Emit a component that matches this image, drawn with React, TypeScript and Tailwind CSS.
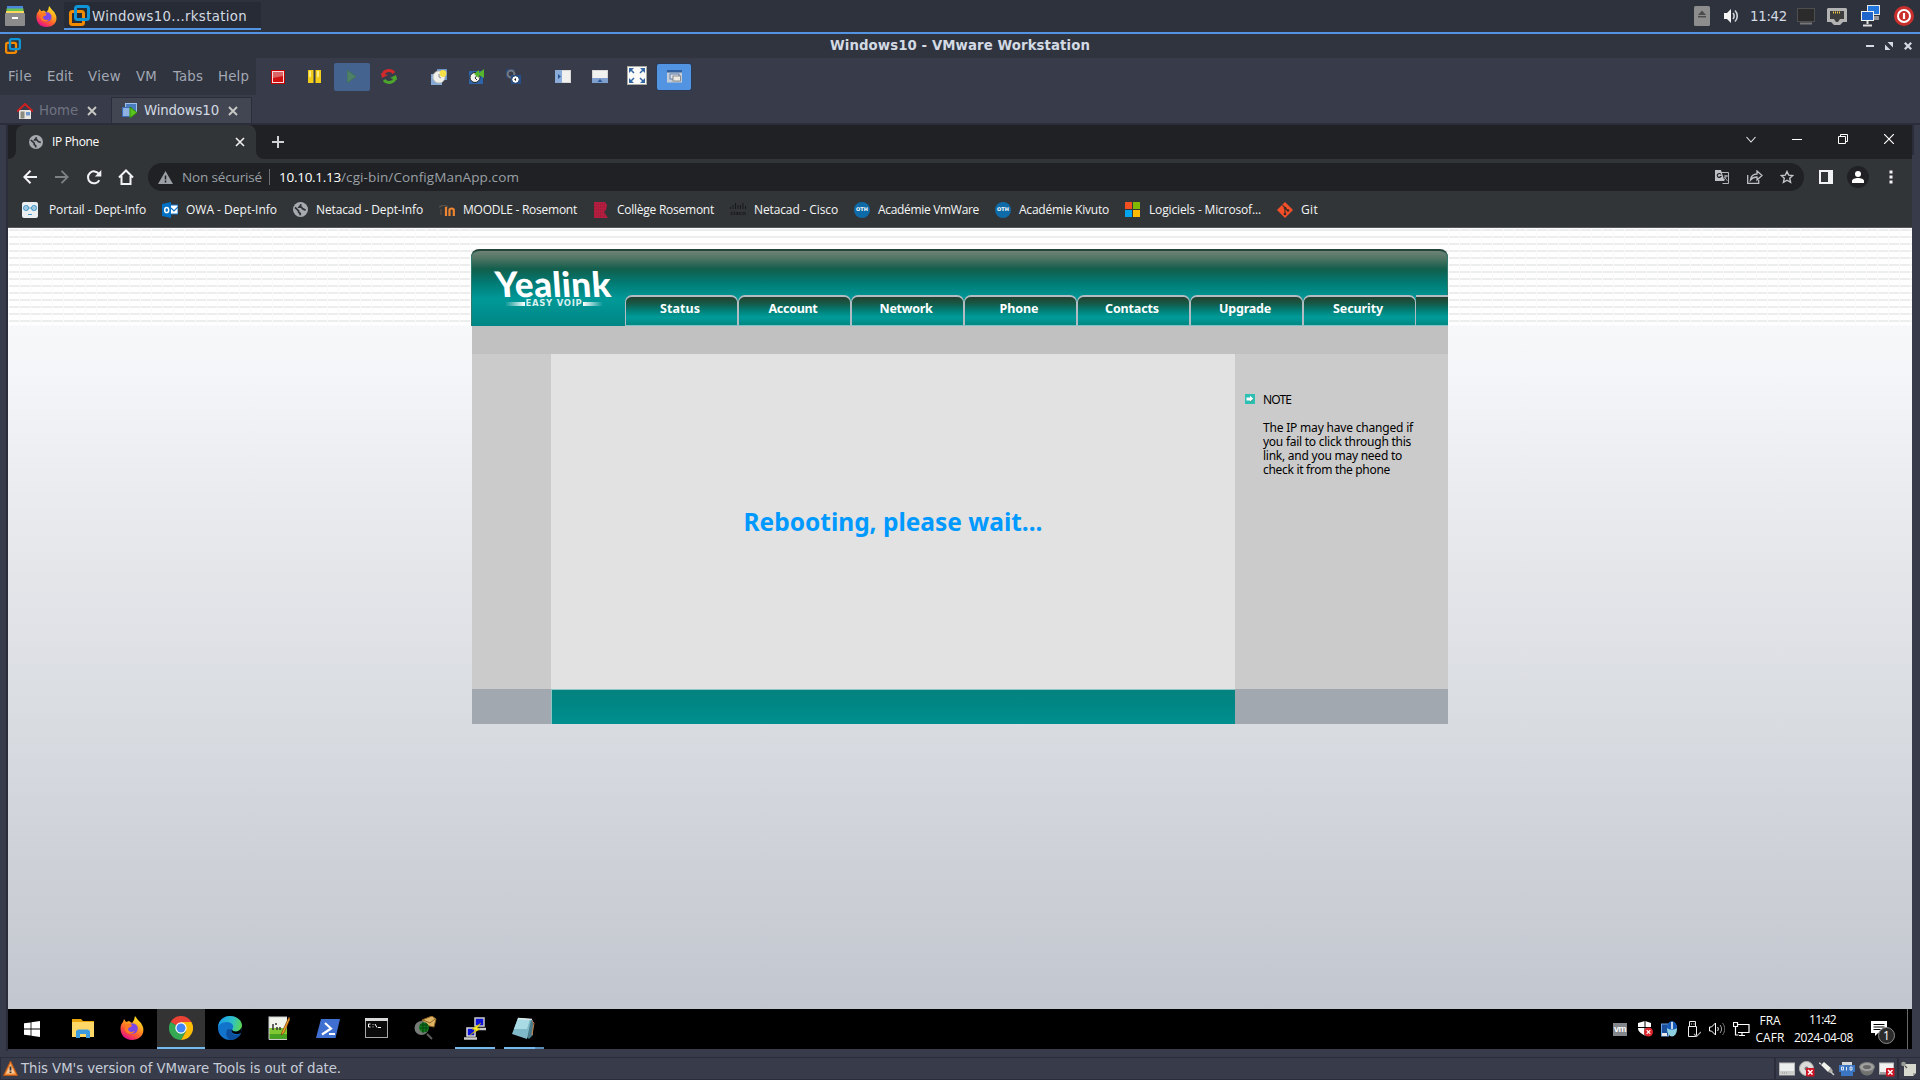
import { useLayoutEffect, useRef, useState } from "react";
import type { ReactNode } from "react";

/* Single line of text whose tracking is computed so that it fills `w` pixels. */
function T({ w, className = "", children }: { w: number; className?: string; children: ReactNode }) {
  const ref = useRef<HTMLSpanElement>(null);
  const [ls, setLs] = useState(0);
  useLayoutEffect(() => {
    const el = ref.current;
    if (!el) return;
    const n = (el.textContent ?? "").length;
    setLs((w - el.getBoundingClientRect().width) / n);
  }, [w]);
  return (
    <span ref={ref} className={"inline-block shrink-0 whitespace-nowrap " + className} style={{ letterSpacing: ls + "px" }}>
      {children}
    </span>
  );
}

function Svg({ w, h, vb, className = "", children }: { w: number; h: number; vb?: string; className?: string; children: ReactNode }) {
  return (
    <svg width={w} height={h} viewBox={vb ?? `0 0 ${w} ${h}`} className={"shrink-0 " + className} fill="none">
      {children}
    </svg>
  );
}

function VmLogo({ s, className = "" }: { s: number; className?: string }) {
  return (
    <Svg w={s} h={s} vb="0 0 21 21" className={className}>
      <rect x="6.5" y="1.5" width="13" height="13" rx="2" stroke="#0f95d7" strokeWidth="3" />
      <rect x="1.5" y="6.5" width="13" height="13" rx="2" stroke="#f38b00" strokeWidth="3" />
      <path d="M6.5 9V4" stroke="#0f95d7" strokeWidth="3" />
      <path d="M11 14.5h5" stroke="#0f95d7" strokeWidth="3" />
    </Svg>
  );
}

function Firefox({ s, className = "" }: { s: number; className?: string }) {
  return (
    <Svg w={s} h={s} vb="0 0 24 24" className={className}>
      <defs>
        <linearGradient id="ff" x1="18" y1="2" x2="6" y2="22" gradientUnits="userSpaceOnUse">
          <stop stopColor="#ffe226" />
          <stop offset=".4" stopColor="#ff9a1f" />
          <stop offset=".7" stopColor="#ff5535" />
          <stop offset="1" stopColor="#e31587" />
        </linearGradient>
      </defs>
      <path d="M3 6l1-3 2 3 3-1 3 2 2-3 1-4 3 4 3 3 2 4c2 8-4 13-11 13S.5 19 .5 12.500C.5 9.500 1.500 7.500 3 6z" fill="url(#ff)" />
      <circle cx="12.500" cy="12.500" r="5.300" fill="#7a48e6" />
      <path d="M5 9c3-2 5-1 7 0l-1 2c-2 0-3 1-3 2.500 1 3 5 3 7 1-2 5-9 4-10-1z" fill="#ff7a22" />
    </Svg>
  );
}

function Globe({ s = 14 }: { s?: number }) {
  return (
    <Svg w={s} h={s} vb="0 0 14 14">
      <circle cx="7" cy="7" r="7" fill="#a6abb0" />
      <path d="M1.800 5l3.400 3.200v1.300l1.500 1.200v1.700M7.500 2.200c-.4 1.500-1 1.600-1.700 2.600h2l1.400 1.700 2.600 1" stroke="#323538" strokeWidth="1.700" />
    </Svg>
  );
}

function Oth() {
  return (
    <span className="flex size-4 shrink-0 items-center justify-center rounded-full bg-[#0f6ba8] font-['DejaVu_Sans'] text-[5px] font-bold text-white">
      OTH
    </span>
  );
}

function CloseX({ s, c, sw = 1.6, className = "" }: { s: number; c: string; sw?: number; className?: string }) {
  return (
    <Svg w={s} h={s} vb="0 0 10 10" className={className}>
      <path d="M1 1l8 8M9 1l-8 8" stroke={c} strokeWidth={sw} />
    </Svg>
  );
}

function HostPanel() {
  return (
    <div className="flex h-[34px] items-center border-b-2 border-[#5294e2] bg-[#2e323d]">
      <Svg w={20} h={20} className="ml-[5px]">
        <rect x="2" width="16" height="4" fill="#4a86dc" />
        <rect x="1.500" y="2.500" width="17" height="3" fill="#66c350" />
        <rect x="1" y="5" width="18" height="3" fill="#f9d65c" />
        <rect y="7" width="20" height="13" rx="1" fill="#8b8b8b" />
        <rect x="7" y="11" width="6" height="2" fill="#fff" />
      </Svg>
      <Firefox s={21} className="ml-[11px]" />
      <div className="ml-[7px] flex h-7 w-[197px] items-center border-b-2 border-[#5294e2] bg-[#272b35] pl-[5px]">
        <VmLogo s={21} />
        <T w={155} className="ml-[2px] pt-[3px] text-[13.3px] text-[#d3dae3]">Windows10...rkstation</T>
      </div>
      <div className="ml-auto flex items-center pr-[6px]">
        <Svg w={16} h={20}>
          <rect width="16" height="20" rx="1.500" fill="#8d8d8d" />
          <path d="M8 4.500l4 4.500H4zM4 10h8v1.500H4z" fill="#4c4c4c" />
        </Svg>
        <Svg w={15} h={14} className="ml-[14px]">
          <path d="M0 4h3l4-4v14l-4-4H0z" fill="#f5f5f5" />
          <path d="M9 4c1.500 2 1.500 4 0 6M11 1.500c3 3 3 8 0 11" stroke="#d0d3d8" strokeWidth="1.600" />
        </Svg>
        <T w={37} className="ml-[11px] pt-px text-[13.3px] text-[#d3dae3]">11:42</T>
        <Svg w={18} h={17} className="ml-[10px]">
          <rect x=".5" y=".5" width="17" height="13" fill="#2b2b2b" stroke="#4e4e4e" />
          <path d="M3 15.500h12" stroke="#777" strokeWidth="2" />
        </Svg>
        <Svg w={20} h={17} className="ml-[12px]">
          <path d="M1 0h18l1 1v13h-4l-3 3H7l-3-3H0V1z" fill="#b3b3b3" />
          <path d="M3 3h14v8h-4l-2 3H9l-2-3H3z" fill="#3d3d3d" />
          <path d="M6 4.500h8" stroke="#f2c744" strokeWidth="2" strokeDasharray="1 1" />
        </Svg>
        <Svg w={20} h={22} className="ml-[14px]">
          <rect x="6.500" y=".5" width="12" height="9" fill="#2277dd" stroke="#e5e5e5" />
          <path d="M11 12h7M12 14h6" stroke="#bbb" strokeWidth="1.500" />
          <rect x=".5" y="6.500" width="12" height="9" fill="#1f66cc" stroke="#f2f2f2" />
          <path d="M6.500 16v3M2 20.500h9" stroke="#ddd" strokeWidth="2" />
        </Svg>
        <Svg w={20} h={20} className="ml-[13px]">
          <circle cx="10" cy="10" r="10" fill="#c9302c" />
          <circle cx="10" cy="10" r="6" stroke="#fff" strokeWidth="2" />
          <path d="M10 7v6" stroke="#fff" strokeWidth="2.200" />
        </Svg>
      </div>
    </div>
  );
}

function TitleBar() {
  return (
    <div className="grid h-6 grid-cols-3 items-center bg-[#2f343f]">
      <VmLogo s={16} className="ml-[5px]" />
      <T w={260} className="justify-self-center text-[13.3px] leading-[20px] font-bold text-[#d3dae3]">Windows10 - VMware Workstation</T>
      <div className="flex items-center gap-[11px] justify-self-end pr-[8px]">
        <Svg w={8} h={8}><path d="M0 4h8" stroke="#d3dae3" strokeWidth="2" /></Svg>
        <Svg w={8} h={8}><path d="M2.500 0H8v5.500zM0 2.500V8h5.500z" fill="#d3dae3" /></Svg>
        <CloseX s={8} c="#d3dae3" sw={2.800} />
      </div>
    </div>
  );
}

function MenuRow() {
  const m = "text-[13.3px] text-[#a3a8b4]";
  return (
    <div className="flex h-[37px] bg-[#383b4a]">
      <div className="flex w-64 items-center bg-[#2f343f] pl-2">
        <T w={24} className={m}>File</T>
        <T w={26} className={m + " ml-[15px]"}>Edit</T>
        <T w={33} className={m + " ml-[15px]"}>View</T>
        <T w={21} className={m + " ml-[15px]"}>VM</T>
        <T w={30} className={m + " ml-[16px]"}>Tabs</T>
        <T w={31} className={m + " ml-[15px]"}>Help</T>
      </div>
      <div className="flex items-center pl-[15px]">
        <Svg w={14} h={14}>
          <rect x=".5" y=".5" width="13" height="13" fill="#f8dada" stroke="#c40000" />
          <rect x="2" y="2" width="10" height="10" fill="#cf1111" />
          <path d="M2 2h10v4l-10 2z" fill="#dc6464" />
        </Svg>
        <Svg w={13} h={13} className="ml-[23px]">
          <rect width="5.500" height="13" fill="#f2ce1b" />
          <rect x="7.500" width="5.500" height="13" fill="#f2ce1b" />
          <path d="M1 1h2v6H1zM9 1h2v6H9z" fill="#fbe98a" />
        </Svg>
        <div className="ml-[13px] flex h-7 w-9 items-center justify-center rounded-[2px] bg-[#45638f]">
          <Svg w={9} h={13} className="-ml-0.5"><path d="M0 0l9 6.500L0 13z" fill="#4f8169" stroke="#3f7358" /></Svg>
        </div>
        <Svg w={16} h={15} className="ml-[11px]">
          <path d="M2 7c0-6 8-7 11-3" stroke="#d02a2a" strokeWidth="3" />
          <path d="M0 4l1 5 6-3z" fill="#d02a2a" />
          <path d="M14 8c0 6-8 7-11 3" stroke="#4da62c" strokeWidth="3" />
          <path d="M16 11l-1-5-6 3z" fill="#4da62c" />
        </Svg>
        <Svg w={16} h={16} className="ml-[34px]">
          <rect x="6" width="10" height="11" fill="#6d93c6" />
          <rect y="5" width="11" height="11" fill="#86a9d6" />
          <circle cx="8" cy="8" r="6" fill="#f0f0ea" stroke="#c5c5c0" />
          <circle cx="12" cy="4.500" r="3.400" fill="#f5e04a" />
          <path d="M8 8V5M8 8l2 1" stroke="#888" />
        </Svg>
        <Svg w={16} h={16} className="ml-[21px]">
          <rect x="1" y="2" width="14" height="13" fill="#2d63a8" />
          <circle cx="7" cy="8.500" r="5" fill="#f2f2ee" stroke="#222" />
          <path d="M7 9l3-4M7 9l2 2" stroke="#333" />
          <path d="M16 0v9l-5-3v3L6 5l5-4v3z" fill="#55b52c" />
        </Svg>
        <Svg w={16} h={16} className="ml-[22px]">
          <path d="M1.500 8.500v-7h7" stroke="#24508e" strokeWidth="2" />
          <circle cx="5" cy="5" r="3.400" stroke="#737880" strokeWidth="2" />
          <rect x="5" y="6" width="10" height="9" fill="#24508e" />
          <circle cx="9.500" cy="10.500" r="3.800" fill="#fff" stroke="#173766" />
          <path d="M8 10.500l2-1.500v3z" fill="#222" />
        </Svg>
        <Svg w={16} h={13} className="ml-[33px]">
          <rect x=".5" y=".5" width="15" height="12" fill="#f1f1ef" stroke="#d6d6d4" />
          <rect width="7" height="13" fill="#8bacd8" />
          <path d="M3 4l3 2.500L3 9z" fill="#2c5796" />
        </Svg>
        <Svg w={16} h={13} className="ml-[21px]">
          <rect x=".5" y=".5" width="15" height="12" fill="#f1f1ef" stroke="#d6d6d4" />
          <rect y="8" width="16" height="5" fill="#7f9fcd" />
          <path d="M5.500 12L8 9l2.500 3z" fill="#2c5796" />
        </Svg>
        <Svg w={20} h={20} className="-mt-0.5 ml-[19px]">
          <rect x=".5" y=".5" width="19" height="18" fill="#fbfbfa" stroke="#aaa9a4" />
          <path d="M2 2h5L2 7zM18 2h-5l5 5zM2 17h5l-5-5zM18 17h-5l5-5z" fill="#3465a4" />
          <path d="M4 4l3 3M16 4l-3 3M4 15l3-3M16 15l-3-3" stroke="#3465a4" strokeWidth="1.500" />
        </Svg>
        <div className="ml-[10px] flex h-[26px] w-[34px] items-center justify-center rounded-[2px] bg-[#5294e2] shadow-[0_0_0_1px_#2b3a52]">
          <Svg w={15} h={13}>
            <rect width="15" height="12.500" fill="#c4ccd6" />
            <rect width="15" height="2.500" fill="#33609f" />
            <rect x="3" y="4" width="9" height="5" fill="#dde2e8" stroke="#5f7fae" />
            <rect x="6" y="6" width="7.500" height="5" fill="#eceae2" stroke="#777" strokeWidth=".8" />
          </Svg>
        </div>
      </div>
    </div>
  );
}

function VmTabs() {
  return (
    <div className="flex h-[30px] border-b-2 border-[#2b2e3a] bg-[#383b4a]">
      <div className="flex w-[111px] items-center pt-[3px] pl-[17px]">
        <Svg w={16} h={16}>
          <path d="M2 7h12v9H2z" fill="#e8e6de" />
          <path d="M0 8.500L8 1l8 7.500" stroke="#cf1f1f" strokeWidth="2" />
          <rect x="3.500" y="8.500" width="4" height="7" fill="#8a8a80" />
          <rect x="9" y="9" width="4" height="3.500" fill="#7098cf" />
        </Svg>
        <T w={39} className="ml-[6px] text-[13.3px] text-[#6f7380]">Home</T>
        <CloseX s={10} c="#c8c9c4" sw={1.900} className="ml-[9px]" />
      </div>
      <div className="mt-[2px] flex w-[141px] items-center border border-b-0 border-[#2b2e3a] bg-[#424652] pl-[10px]">
        <Svg w={16} h={15}>
          <rect x="3.500" y=".5" width="11" height="8" fill="#4a7cc0" stroke="#9fc0ea" />
          <rect x=".5" y="4.500" width="9" height="9" fill="#8db1e0" stroke="#3d6db4" />
          <path d="M8 4l7 5.500L8 15z" fill="#59c41d" stroke="#348a0d" />
        </Svg>
        <T w={75} className="ml-[6px] text-[13.3px] text-[#d3dae3]">Windows10</T>
        <CloseX s={10} c="#c8c9c4" sw={1.900} className="ml-[9px]" />
      </div>
    </div>
  );
}

const seg = "font-['Open_Sans']";

function ChromeTop() {
  return (
    <>
      <div className="flex h-[34px] bg-[#202124]">
        <div className="flex h-full w-2 bg-[#323538]"><div className="h-full w-full rounded-br-lg bg-[#202124]" /></div>
        <div className="flex w-60 items-center rounded-t-lg bg-[#323538] pl-[13px]">
          <Globe />
          <T w={47} className={seg + " ml-[9px] text-[12px] text-white"}>IP Phone</T>
          <CloseX s={10} c="#f1f1f1" className="ml-auto mr-[11px]" />
        </div>
        <div className="flex h-full w-2 bg-[#323538]"><div className="h-full w-full rounded-bl-lg bg-[#202124]" /></div>
        <Svg w={12} h={12} className="ml-2 self-center"><path d="M6 0v12M0 6h12" stroke="#cfd1d4" strokeWidth="2" /></Svg>
        <div className="ml-auto flex items-center gap-9 pr-[18px] pb-[6px]">
          <Svg w={10} h={7}><path d="M.5 1L5 6l4.500-5" stroke="#e8eaed" strokeWidth="1.100" /></Svg>
          <Svg w={10} h={10}><path d="M0 5.500h10" stroke="#fff" /></Svg>
          <Svg w={10} h={10}><path d="M.5 2.500h7v7h-7zM2.500 2V.5h7v7H8" stroke="#fff" /></Svg>
          <Svg w={10} h={10}><path d="M0 0l10 10M10 0L0 10" stroke="#fff" strokeWidth="1.200" /></Svg>
        </div>
      </div>
      <div className="flex h-9 items-center bg-[#323538] pl-[15px]">
        <Svg w={14} h={14}><path d="M14 7H1.500M7.500.8L1.300 7l6.200 6.200" stroke="#f1f3f4" strokeWidth="2" /></Svg>
        <Svg w={14} h={14} className="ml-[18px]"><path d="M0 7h12.500M6.500.8L12.700 7l-6.200 6.200" stroke="#7e8184" strokeWidth="1.800" /></Svg>
        <Svg w={15} h={15} className="ml-[18px]">
          <path d="M12.300 10.200A6 6 0 1 1 12 4" stroke="#f1f3f4" strokeWidth="2" />
          <path d="M14.300 0v6.500H7.800z" fill="#f1f3f4" />
        </Svg>
        <Svg w={16} h={16} className="ml-[16px]"><path d="M1 8.500L8 1.500l7 7M3.500 7v8h9V7" stroke="#f1f3f4" strokeWidth="2" /></Svg>
        <div className="ml-[14px] flex h-7 w-[1656px] items-center rounded-full bg-[#202124] pl-[10px]">
          <Svg w={15} h={13}><path d="M7.500 0L15 13H0z" fill="#9aa0a6" /><path d="M7.500 4.500v4M7.500 9.500v2" stroke="#202124" strokeWidth="1.500" /></Svg>
          <T w={80} className={seg + " ml-[9px] text-[13.5px] text-[#9aa0a6]"}>Non sécurisé</T>
          <div className="ml-[7px] h-4 w-px bg-[#6b6e72]" />
          <T w={62} className={seg + " ml-[9px] text-[13.5px] text-white"}>10.10.1.13</T>
          <T w={178} className={seg + " text-[13.5px] text-[#9aa0a6]"}>/cgi-bin/ConfigManApp.com</T>
          <div className="ml-auto flex items-center pr-[10px]">
            <Svg w={14} h={14}>
              <path d="M6 2.500h7.500v11h-6" stroke="#b4b7ba" />
              <path d="M0 0h6l3.500 11H0z" fill="#bdc1c6" />
              <path d="M6 4.500a2 2 0 1 0 0 2H4.500" stroke="#202124" strokeWidth="1.100" />
              <path d="M9 6h4M11 5v1c0 2-1 3-2 4M9.500 7c1 2 2 3 3 3.500" stroke="#b4b7ba" />
            </Svg>
            <Svg w={16} h={14} className="ml-[18px]">
              <path d="M.7 5v8.300h11V10" stroke="#bdc1c6" strokeWidth="1.300" />
              <path d="M3.500 10c.5-4 3-6 6.500-6V1l5 4.500-5 4.500V7C7 7 5 8 3.500 10z" stroke="#bdc1c6" strokeWidth="1.300" />
            </Svg>
            <Svg w={14} h={14} className="ml-[17px]">
              <path d="M7 1.500l1.700 3.700 4 .4-3 2.700.9 4L7 10.200l-3.600 2.100.9-4-3-2.700 4-.4z" stroke="#c3c6ca" strokeWidth="1.400" />
            </Svg>
          </div>
        </div>
        <Svg w={14} h={14} className="ml-[15px]"><path d="M0 0h14v14H0zM2 2v10h7V2z" fill="#f1f3f4" fillRule="evenodd" /></Svg>
        <div className="ml-[14px] flex size-[22px] items-center justify-center rounded-full bg-[#202124]">
          <Svg w={12} h={12}><circle cx="6" cy="3" r="3" fill="#fff" /><path d="M0 12v-2c0-4 12-4 12 0v2z" fill="#fff" /></Svg>
        </div>
        <Svg w={4} h={14} className="ml-[20px]"><path d="M.5.500h3v3h-3zM.5 5.500h3v3h-3zM.5 10.500h3v3h-3z" fill="#f1f3f4" /></Svg>
      </div>
    </>
  );
}

function Bookmarks() {
  const c = seg + " text-[12px] text-[#f4f5f6]";
  return (
    <div className="flex h-[33px] items-center border-b border-[#55585b] bg-[#323538] pb-[3px] pl-[14px]">
      <Svg w={16} h={16}>
        <rect width="16" height="16" rx="2" fill="#eceff1" />
        <circle cx="4" cy="6" r="2.300" stroke="#4a9ac9" strokeWidth="1.300" /><circle cx="12" cy="6" r="2.300" stroke="#4a9ac9" strokeWidth="1.300" />
        <path d="M4 5v2M12 5v2M6 6h4M6 12.500h4" stroke="#4a9ac9" />
      </Svg>
      <T w={97} className={c + " ml-[11px]"}>Portail - Dept-Info</T>
      <Svg w={16} h={16} className="ml-[16px]">
        <rect x="8" y="3" width="8" height="9" fill="#fff" stroke="#1272c4" />
        <path d="M9 6l3 3 4-4" stroke="#1272c4" strokeWidth="1.200" />
        <path d="M0 2l9-2v16l-9-2z" fill="#0072c6" />
        <ellipse cx="4.700" cy="8" rx="2" ry="2.600" stroke="#fff" strokeWidth="1.500" />
      </Svg>
      <T w={91} className={c + " ml-[8px]"}>OWA - Dept-Info</T>
      <div className="ml-4 flex"><Globe s={15} /></div>
      <T w={107} className={c + " ml-[8px]"}>Netacad - Dept-Info</T>
      <Svg w={16} h={12} className="ml-[16px] mt-0.5">
        <path d="M0 2l5-2 4 2" stroke="#57504a" strokeWidth="1.500" />
        <path d="M2 4v6" stroke="#5b4a3f" strokeWidth="1.500" />
        <path d="M7 11V2M10.500 11V5c0-2 4.300-2 4.300 0v6" stroke="#ee8530" strokeWidth="2.200" />
      </Svg>
      <T w={114} className={c + " ml-[8px]"}>MOODLE - Rosemont</T>
      <Svg w={14} h={16} className="ml-[17px]">
        <path d="M0 0h11l2 3-1 5-2 2 4 6H0z" fill="#b81d3f" />
        <path d="M0 2h12M0 5h12M0 8h11M0 11h11M0 14h12" stroke="#7a2238" strokeWidth=".8" strokeDasharray="1 1" />
      </Svg>
      <T w={97} className={c + " ml-[9px]"}>Collège Rosemont</T>
      <div className="ml-4 flex w-4 flex-col items-center">
        <Svg w={16} h={7}><path d="M.5 4v2M3 2v4M5.500 0v6M8 2v4M10.500 2v4M13 0v6M15.500 3v3" stroke="#16181a" /></Svg>
        <span className="font-['DejaVu_Sans'] text-[5.5px] leading-[6px] font-bold text-[#16181a]">cisco</span>
      </div>
      <T w={84} className={c + " ml-[8px]"}>Netacad - Cisco</T>
      <div className="ml-4 flex"><Oth /></div>
      <T w={101} className={c + " ml-[8px]"}>Académie VmWare</T>
      <div className="ml-4 flex"><Oth /></div>
      <T w={90} className={c + " ml-[8px]"}>Académie Kivuto</T>
      <Svg w={15} h={15} className="ml-[16px]">
        <rect width="7" height="7" fill="#f25022" /><rect x="8" width="7" height="7" fill="#7fba00" />
        <rect y="8" width="7" height="7" fill="#00a4ef" /><rect x="8" y="8" width="7" height="7" fill="#ffb900" />
      </Svg>
      <T w={112} className={c + " ml-[9px]"}>Logiciels - Microsof...</T>
      <Svg w={16} h={16} className="ml-[16px]">
        <path d="M8 0l8 8-8 8-8-8z" fill="#f34f29" />
        <path d="M5.500 3l2.500 3v6M8 6l3 2.500" stroke="#3a2a26" strokeWidth="1.100" />
        <circle cx="8" cy="12" r="1.300" fill="#3a2a26" /><circle cx="11" cy="8.500" r="1.300" fill="#3a2a26" /><circle cx="8" cy="6" r="1.300" fill="#3a2a26" />
      </Svg>
      <T w={17} className={c + " ml-[8px]"}>Git</T>
    </div>
  );
}

const tahoma = "font-['Noto_Sans','DejaVu_Sans']";

function NavTab({ label, w }: { label: string; w: number }) {
  return (
    <div className="flex h-[31px] w-[113px] justify-center rounded-t-[7px] border-x border-t-2 border-b border-[#b3bcc2] border-b-[#7cc4c4] bg-[linear-gradient(#24402f_0%,#175745_22%,#00817a_50%,#009c99_72%,#008783_100%)] pr-[3px]">
      <T w={w} className={tahoma + " mt-[3px] text-[12.5px] leading-[17px] font-bold text-white"}>{label}</T>
    </div>
  );
}

function Page() {
  return (
    <div className="flex h-[781px] flex-col items-center bg-[linear-gradient(#fdfefd_0,#fdfefd_97px,#f7f8f9_98px,#f4f5f8_150px,#e9ebee_270px,#d8dbe0_500px,#c2c6ce_781px)]">
      <div className="flex h-[98px] w-full bg-[repeating-linear-gradient(transparent_0_1px,#eceeed_1px_3px,transparent_3px_7px)]">
        <div className="h-full w-[463px] bg-[repeating-linear-gradient(90deg,#f9faf9_0_1px,transparent_1px_11px)]" />
        <div className="mt-[21px] flex h-[77px] w-[977px] rounded-t-[8px] border-t-2 border-[#24453a] bg-[linear-gradient(#6d8376_0%,#4f7463_10%,#125e4c_24%,#007d77_44%,#009998_64%,#008b89_90%,#008684_100%)] shadow-[inset_1px_0_0_#2f7a6c,inset_-1px_0_0_#2f7a6c]">
          <div className="flex w-[154px] shrink-0 flex-col items-center pt-[18px] pl-[11px]">
            <T w={118} className="font-['Lato'] text-[35px] leading-[28px] font-black text-white [transform:skewX(4deg)]">Yealink</T>
            <div className="mt-[3px] flex items-center">
              <div className="h-1 w-[20px] bg-linear-to-r from-transparent to-white" />
              <T w={58} className="pl-px font-['DejaVu_Sans'] text-[8.5px] leading-[7px] font-bold text-[#d9f0ef]">EASY VOIP</T>
              <div className="h-1 w-[20px] bg-linear-to-l from-transparent to-white" />
            </div>
          </div>
          <div className="mt-auto flex">
            <NavTab label="Status" w={40} />
            <NavTab label="Account" w={49} />
            <NavTab label="Network" w={53} />
            <NavTab label="Phone" w={39} />
            <NavTab label="Contacts" w={54} />
            <NavTab label="Upgrade" w={52} />
            <NavTab label="Security" w={50} />
            <div className="h-[31px] w-8 border-t-2 border-b border-[#b3bcc2] border-b-[#7cc4c4] bg-[linear-gradient(#24402f_0%,#175745_22%,#00817a_50%,#009c99_72%,#008783_100%)]" />
          </div>
        </div>
        <div className="h-full flex-1 bg-[repeating-linear-gradient(90deg,#f9faf9_0_1px,transparent_1px_11px)]" />
      </div>
      <div className="h-7 w-[976px] bg-[#c1c1c1]" />
      <div className="flex h-[335px] w-[976px] bg-[#cbcbcb]">
        <div className="w-[79px]" />
        <div className="flex w-[684px] justify-center bg-[#e2e2e2]">
          <T w={299} className={tahoma + " mt-[153px] text-[24.5px] leading-[30px] font-bold text-[#0099ff]"}>Rebooting, please wait...</T>
        </div>
        <div className="flex-1 pt-[40px] pl-[10px] text-black">
          <div className="flex items-start">
            <Svg w={10} h={10}>
              <rect width="10" height="10" fill="#2cc0b5" />
              <path d="M1.500 3.500H5V1.800l3.500 3.200L5 8.200V6.500H1.500z" fill="#fff" /><path d="M5 8.200l3.500-3.200" stroke="#174" strokeWidth=".8" />
            </Svg>
            <T w={28} className={tahoma + " mt-[-1px] ml-[8px] text-[12px] leading-[14px]"}>NOTE</T>
          </div>
          <div className={tahoma + " mt-[14px] ml-[18px] flex flex-col items-start text-[12px] leading-[14px]"}>
            <T w={150}>The IP may have changed if</T>
            <T w={148}>you fail to click through this</T>
            <T w={139}>link, and you may need to</T>
            <T w={127}>check it from the phone</T>
          </div>
        </div>
      </div>
      <div className="flex h-[35px] w-[976px] bg-[#a1a8b0] pl-[79px]">
        <div className="w-[684px] border-t border-l border-[#8ec6c5] bg-[linear-gradient(#05827f,#008785_45%,#009090)]" />
      </div>
    </div>
  );
}

function TaskSlot({ active, children }: { active?: boolean; children: ReactNode }) {
  return (
    <div className={"mr-px flex h-10 w-12 items-center justify-center border-b-2 " + (active ? "border-[#76b9ed] bg-[#333333]" : "border-transparent")}>
      {children}
    </div>
  );
}

function Taskbar() {
  const w = seg + " text-[12px] text-white";
  return (
    <div className="flex h-10 items-center bg-black">
      <div className="flex w-[51px] justify-start pl-4">
        <Svg w={16} h={16}><path d="M0 2.300l6.600-.9v6.200H0zM7.400 1.200L16 0v7.600H7.400zM0 8.400h6.600v6.200L0 13.700zM7.400 8.400H16V16l-8.600-1.200z" fill="#fff" /></Svg>
      </div>
      <TaskSlot>
        <Svg w={22} h={19}>
          <path d="M0 0h9l2 2h11v16H0z" fill="#e8a40c" /><path d="M0 3h22v15H0z" fill="#ffd767" />
          <path d="M4 19v-7l2-1.500h10l2 1.500v7h-4v-4H8v4z" fill="#3c9be0" />
        </Svg>
      </TaskSlot>
      <TaskSlot><Firefox s={24} /></TaskSlot>
      <TaskSlot active>
        <Svg w={24} h={24}>
          <path d="M12 12L1.600 6A12 12 0 0 1 22.400 6z" fill="#ea4335" />
          <path d="M12 12L1.600 6A12 12 0 0 0 12 24l5-9z" fill="#34a853" />
          <path d="M12 6h10.400A12 12 0 0 1 12 24l5.200-9z" fill="#fbbc05" />
          <circle cx="12" cy="12" r="5.700" fill="#fff" /><circle cx="12" cy="12" r="4.500" fill="#4285f4" />
        </Svg>
      </TaskSlot>
      <TaskSlot>
        <Svg w={24} h={24}>
          <defs>
            <linearGradient id="ed" x1="2" y1="4" x2="24" y2="10" gradientUnits="userSpaceOnUse"><stop stopColor="#1ba0e8" /><stop offset=".55" stopColor="#2fc1c4" /><stop offset="1" stopColor="#5fd84c" /></linearGradient>
          </defs>
          <circle cx="12" cy="12" r="12" fill="#1173c9" />
          <path d="M0 12C0 5 5 0 12 0c7 0 12 4.500 12 9.500 0 4-3 6-6.500 6-2.500 0-3.500-1-3.500-1.800C17 10 14 6 9 6c-5 0-9 3-9 6z" fill="url(#ed)" />
          <path d="M14 13.700c-2 5 4 6.500 9 3.800-2 4-6 6.500-11 6.500-4-2-5-8-2-11z" fill="#0c4f9e" />
          <path d="M14 13c-1 2 0 5 4 5 2.500 0 4-.5 5.500-1.500L24 10c-1 4-4 5.500-6.500 5.500C15 15.500 14 14.500 14 13z" fill="#000" />
        </Svg>
      </TaskSlot>
      <TaskSlot>
        <Svg w={22} h={24}>
          <path d="M1 1h18v22H1z" fill="#f0f4ea" /><path d="M1 12h18v11H1z" fill="#7fc832" /><path d="M1 18h18v5H1z" fill="#46a021" />
          <path d="M1 1h18M1 .5v23h18" stroke="#ccc" /><path d="M5 8v6M7 8h2M9 11v3M12 11v3" stroke="#333" strokeWidth="1.500" />
          <path d="M21 1l-7 15-1 3 3-2 6-14z" fill="#f5a423" stroke="#7a3c12" strokeWidth=".7" />
        </Svg>
      </TaskSlot>
      <TaskSlot>
        <Svg w={24} h={19}>
          <path d="M5 0h19l-4.500 19H0z" fill="#3f6fd1" /><path d="M9 4l6 5.500L6 15.500M13 15h6" stroke="#fff" strokeWidth="2.200" />
        </Svg>
      </TaskSlot>
      <TaskSlot>
        <Svg w={23} h={20} className="-ml-0.5">
          <rect x=".5" y=".5" width="22" height="19" fill="#0b0b0b" stroke="#a9a9a9" /><path d="M0 1.500h23" stroke="#d8d8d8" strokeWidth="3" />
          <path d="M5.500 6H3.500v3h2M8 6v.8M8 8.500v.8M10 6l2 3.500M13 9.500h3" stroke="#fff" />
        </Svg>
      </TaskSlot>
      <TaskSlot>
        <Svg w={23} h={24} className="-ml-0.5">
          <path d="M8 4l10-4 4 3-2 8-9-2z" fill="#e0b566" stroke="#8a6420" /><path d="M9 4l7 3 5-4" stroke="#8a6420" />
          <circle cx="7.500" cy="12" r="7" fill="#777b78" /><circle cx="10" cy="11.500" r="5" fill="#12791c" />
          <path d="M6 9h8M6 12h9M9 6v11M12 7v9" stroke="#041" /><path d="M13 18l5 5" stroke="#5d5d5d" strokeWidth="2" />
        </Svg>
      </TaskSlot>
      <div className="mr-[9px] ml-1 flex h-10 w-10 items-center justify-center border-b-2 border-[#76b9ed]">
        <Svg w={23} h={23}>
          <rect x="11" y="1" width="9" height="8" fill="#0d13d8" stroke="#ccc" strokeWidth="1.500" /><path d="M10 12h12" stroke="#ccc" strokeWidth="2.500" />
          <rect x="3" y="11" width="8" height="8" fill="#0d13d8" stroke="#ddd" strokeWidth="1.500" /><path d="M0 21.500h13" stroke="#ccc" strokeWidth="2.500" />
          <path d="M17 6l-9 6 4 1-6 5 10-6-3-1z" fill="#ffee22" stroke="#b8a500" strokeWidth=".5" />
        </Svg>
      </div>
      <div className="flex h-10">
        <div className="flex w-[31px] items-center justify-end border-b-2 border-[#76b9ed]">
          <Svg w={23} h={23}>
            <path d="M18 2l3 1v15l-4 4-4-4z" fill="#4c7c8a" />
            <path d="M6 1l13 1.500L15 22 0 17z" fill="#7fb8c6" /><path d="M6 1l12 1-3 10L2 12z" fill="#a9dbe4" />
            <path d="M20 4l2 2-2 12" stroke="#c9834a" /><path d="M6 1.500l14 1" stroke="#dfe9ea" strokeWidth="1.500" />
          </Svg>
        </div>
        <div className="w-[9px] border-b-2 border-[#5a8cb3]" />
      </div>
      <div className="ml-auto flex h-10 items-center">
        <span className="flex h-[13px] w-[14px] items-center justify-center bg-[#83868a] font-['Liberation_Sans'] text-[9px] leading-none font-bold tracking-[-0.5px] text-white">vm</span>
        <Svg w={15} h={16} className="ml-[11px]">
          <path d="M7 0l6 2v5c0 4-3 6-6 7.500C4 13 0 11 0 7V2z" fill="#fff" /><path d="M7 0v14M0 6.500h13" stroke="#000" />
          <circle cx="10.500" cy="11" r="4.500" fill="#e0252b" /><path d="M8.700 9.200l3.600 3.600M12.300 9.200l-3.600 3.600" stroke="#fff" strokeWidth="1.200" />
        </Svg>
        <Svg w={16} h={16} className="ml-[8px]">
          <rect x=".5" y="3" width="7" height="12" fill="#1b4f9c" stroke="#6fa3e0" /><path d="M1 12h5v3H1z" fill="#e9e9e9" />
          <ellipse cx="11" cy="8" rx="5" ry="7.500" fill="#8fd0e0" /><path d="M6 7c0-9 10-9 10 0-3 2-7 2-10 0z" fill="#1558b5" /><path d="M11 1v7" stroke="#fff" strokeWidth="1.500" />
        </Svg>
        <Svg w={14} h={17} className="ml-[10px]">
          <path d="M2.500 6V.5h6V6M1.500 5.500h8v10h-8zM4 3h1M6.500 3h1" stroke="#eee" /><path d="M7 13l2.500 2.500L14 11" stroke="#aaa" strokeWidth="1.200" />
        </Svg>
        <Svg w={16} h={14} className="ml-[8px]">
          <path d="M.5 5h2L6.500 1v12l-4-4h-2zM8.500 5c1 1 1 3 0 4" stroke="#fff" /><path d="M11 3c2 2.500 2 5.500 0 8" stroke="#aaa" /><path d="M13.500 1c3 4 3 8 0 12" stroke="#777" />
        </Svg>
        <Svg w={17} h={14} className="ml-[8px]">
          <path d="M5 2.500h11v8H5M9 11v2M6 13.500h6M.5.500h4v4h-4zM2.500 5v8h3" stroke="#fff" strokeWidth="1.200" />
        </Svg>
        <div className="ml-[5px] flex w-[30px] flex-col items-center">
          <T w={21} className={w + " leading-[17px]"}>FRA</T>
          <T w={29} className={w + " leading-[17px]"}>CAFR</T>
        </div>
        <div className="ml-[9px] flex w-[59px] flex-col items-center">
          <T w={27} className={w + " -mt-px -ml-0.5 leading-[17px]"}>11:42</T>
          <T w={59} className={w + " mt-px leading-[17px]"}>2024-04-08</T>
        </div>
        <div className="relative ml-[18px] h-4 w-4">
          <Svg w={16} h={16}><path d="M0 0h16v12H7l-3 3v-3H0z" fill="#fff" /><path d="M2.500 3.500h11M2.500 6h11M2.500 8.500h7" stroke="#000" /></Svg>
          <span className={seg + " absolute top-[6px] left-[7px] flex size-[17px] items-center justify-center rounded-full border border-[#8a8a8a] bg-[#2b2b2b] text-[12px] leading-none text-white"}>1</span>
        </div>
        <div className="mr-1 ml-[20px] h-full w-px bg-[#6a6a6a]" />
      </div>
    </div>
  );
}

function RedX() {
  return (
    <>
      <rect x="7" y="7" width="8.500" height="8.500" rx="1" fill="#cf1322" />
      <path d="M9 9l4.500 4.500M13.500 9L9 13.500" stroke="#fff" strokeWidth="1.500" />
    </>
  );
}

function StatusBar() {
  return (
    <div className="mt-2 flex h-[23px] items-center border-y border-l border-[#2b2e3a] bg-[#383b4a]">
      <Svg w={15} h={16} className="-mt-0.5 ml-[2px]">
        <path d="M7.500 1l7 14.500H.5z" fill="#f08a35" stroke="#b9561a" strokeLinejoin="round" />
        <path d="M7.500 4.500l4.500 9H3z" fill="#f7c79a" /><path d="M7.500 6.500v4M7.500 11.500v1.500" stroke="#333" strokeWidth="1.800" />
      </Svg>
      <T w={320} className="ml-[3px] text-[13.3px] text-[#c6cdd8]">This VM's version of VMware Tools is out of date.</T>
      <div className="ml-auto flex h-full items-center gap-1 border-l-2 border-[#2b2e3a] pr-[2px] pl-[3px]">
        <Svg w={16} h={16}><rect x=".5" y="2" width="15" height="12" fill="#eceeed" stroke="#b8b8b8" /><path d="M1 11.500h14" stroke="#c9ccc9" strokeWidth="3" /><path d="M3 12h6" stroke="#999" strokeDasharray="1 1" /></Svg>
        <Svg w={16} h={16}><circle cx="7.500" cy="7.500" r="7" fill="#dcdcda" stroke="#b0b0b0" /><circle cx="7.500" cy="7.500" r="2" fill="#77797a" /><RedX /></Svg>
        <Svg w={16} h={16}><path d="M2 4l3-3 7 6-3 4z" fill="#f2f2ec" /><path d="M9 11l3-4 2 3-2 2z" fill="#b0b0a8" /><path d="M0 2l2 1M12 11l3 3" stroke="#ccc" strokeWidth="1.500" /></Svg>
        <Svg w={16} h={16}>
          <path d="M3 1h10v3H3z" fill="#d8d8d8" /><path d="M0 4h16v7h-2v4H2v-4H0z" fill="#3c76c2" />
          <path d="M2.500 6h2v3h-2zM7.500 6v3.500M11 6h2v3h-2z" stroke="#dfe9f7" />
        </Svg>
        <Svg w={16} h={16}><path d="M1 7c0 10 14 10 14 0z" fill="#707270" /><ellipse cx="8" cy="6" rx="7.500" ry="4.500" fill="#9fa19f" stroke="#777" /><ellipse cx="8" cy="6" rx="4" ry="2" fill="#666" /></Svg>
        <Svg w={16} h={16}><rect x=".5" y="2" width="14" height="11" fill="#f1f1f1" stroke="#bbb" /><path d="M1 12h13" stroke="#888" strokeWidth="1.500" /><RedX /></Svg>
      </div>
      <div className="flex h-full items-center border-l-2 border-[#2b2e3a] pr-1 pl-[2px]">
        <Svg w={15} h={16}><path d="M3 3h12v9l-3 3H3z" fill="#d7d9cf" /><path d="M12 15v-3h3z" fill="#a5a79c" /><circle cx="2.500" cy="3" r="2.300" fill="#9a9c96" /><path d="M4 5l2 2" stroke="#555" strokeWidth="1.200" /></Svg>
      </div>
    </div>
  );
}

export default function App() {
  return (
    <div className="flex h-[1080px] w-[1920px] flex-col overflow-hidden bg-[#383b4a] font-['DejaVu_Sans',sans-serif]">
      <HostPanel />
      <TitleBar />
      <MenuRow />
      <VmTabs />
      <div className="flex">
        <div className="h-[926px] w-2 border-r-2 border-[#2b2e3a]" />
        <div className="flex h-[924px] w-[1904px] flex-col">
          <ChromeTop />
          <Bookmarks />
          <Page />
          <Taskbar />
        </div>
        <div className="h-[30px] w-[2px] bg-[#2b2e3a]" />
      </div>
      <div className="-mt-[2px]"><StatusBar /></div>
    </div>
  );
}
